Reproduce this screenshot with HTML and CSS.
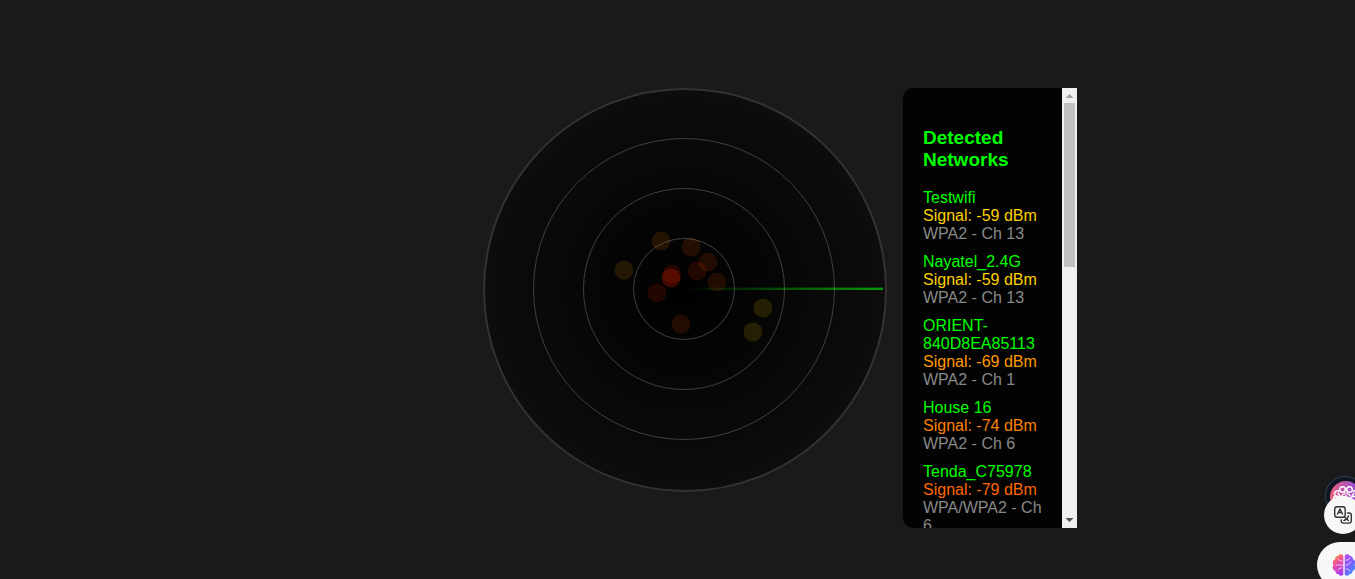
FILE: index.html
```
<!DOCTYPE html>
<html lang="en">
<head>
<meta charset="utf-8">
<title>WiFi Radar</title>
<link rel="stylesheet" href="styles.css">
</head>
<body>
<main class="stage">
  <svg class="radar" viewBox="0 0 404 404" role="img" aria-label="Network radar">
    <defs>
      <radialGradient id="disc"><stop offset="0" stop-color="#000"/><stop offset="1" stop-color="#0d0d0d"/></radialGradient>
      <linearGradient id="sweep" gradientUnits="userSpaceOnUse" x1="200" y1="0" x2="400" y2="0"><stop offset="0" stop-color="#0f0" stop-opacity="0"/><stop offset="1" stop-color="#0f0" stop-opacity=".58"/></linearGradient>
    </defs>
    <circle cx="202" cy="202" r="201" fill="url(#disc)" stroke="#333" stroke-width="2"/>
    <g fill="none" stroke="#404040">
      <circle cx="201" cy="201" r="50.5"/>
      <circle cx="201" cy="201" r="100.5"/>
      <circle cx="201" cy="201" r="150.5"/>
    </g>
    <rect x="202" y="199.600" width="198" height="2.400" fill="url(#sweep)"/>
    <g fill-opacity=".13">
      <circle cx="178" cy="153" r="9.5" fill="#ff8000"/>
      <circle cx="141" cy="182" r="9.5" fill="#ff9900"/>
      <circle cx="208" cy="159" r="9.5" fill="#ff6600"/>
      <circle cx="225" cy="174" r="9.5" fill="#ff5500"/>
      <circle cx="214" cy="183" r="9.5" fill="#ff3300"/>
      <circle cx="234" cy="194" r="9.5" fill="#ff5500"/>
      <circle cx="189" cy="186" r="9.5" fill="#ff2a00"/>
      <circle cx="188" cy="190" r="9.5" fill="#ff2a00" fill-opacity=".24"/>
      <circle cx="174" cy="205" r="9.5" fill="#ff3000"/>
      <circle cx="198" cy="236" r="9.5" fill="#ff5500"/>
      <circle cx="280" cy="220" r="9.5" fill="#ffd000"/>
      <circle cx="270" cy="244" r="9.5" fill="#ffd000"/>
    </g>
  </svg>
  <section class="panel" aria-labelledby="networks-title">
    <div class="scroller">
      <h3 class="title" id="networks-title">Detected Networks</h3>
      <ul class="networks">
        <li class="network"><div>Testwifi</div><div class="strong">Signal: -59 dBm</div><div class="meta">WPA2 - Ch 13</div></li>
        <li class="network"><div>Nayatel_2.4G</div><div class="strong">Signal: -59 dBm</div><div class="meta">WPA2 - Ch 13</div></li>
        <li class="network"><div>ORIENT-840D8EA85113</div><div class="good">Signal: -69 dBm</div><div class="meta">WPA2 - Ch 1</div></li>
        <li class="network"><div>House 16</div><div class="fair">Signal: -74 dBm</div><div class="meta">WPA2 - Ch 6</div></li>
        <li class="network"><div>Tenda_C75978</div><div class="weak">Signal: -79 dBm</div><div class="meta">WPA/WPA2 - Ch 6</div></li>
      </ul>
    </div>
    <div class="scrollbar" aria-hidden="true">
      <svg class="arrow" viewBox="0 0 15 15"><path d="M3.500 10L7.500 6l4 4z" fill="#a3a3a3"/></svg>
      <div class="track"><div class="thumb"></div></div>
      <svg class="arrow" viewBox="0 0 15 15"><path d="M3.500 5L7.500 9l4-4z" fill="#505050"/></svg>
    </div>
  </section>
</main>
<button class="float profile" aria-label="Assistant">
  <svg viewBox="0 0 40 40" width="40" height="40">
    <defs><linearGradient id="pink" x2="1"><stop stop-color="#e8627c"/><stop offset=".45" stop-color="#c155ad"/><stop offset="1" stop-color="#7c48e8"/></linearGradient></defs>
    <circle cx="20" cy="20" r="19.5" fill="#101522" stroke="#34435c"/>
    <circle cx="21" cy="21" r="16" fill="url(#pink)"/>
    <g fill="none" stroke="#fff" stroke-width="1.4" stroke-linecap="round">
      <path d="M21 19v15M20 17c-1 2-3 1-3 3M22 17c1 2 3 1 3 3M15 20l-2-3M27 20l2-3"/>
      <circle cx="17.500" cy="13.500" r="2.800"/><circle cx="24.500" cy="13.500" r="2.800"/>
      <path d="M14 15c-4-1-6 3-3 5 2 1 4 0 5 2M28 15c4-1 6 3 3 5-2 1-4 0-5 2M11 20c-4 1-3 6 1 5M31 20c4 1 3 6-1 5"/>
    </g>
  </svg>
</button>
<button class="float translate" aria-label="Translate">
  <svg viewBox="0 0 38 38" width="38" height="38">
    <circle cx="19" cy="19" r="19" fill="#f8f8f8"/>
    <g fill="none" stroke="#333" stroke-width="1.400" stroke-linecap="round" stroke-linejoin="round">
      <rect x="10.700" y="10.700" width="10.500" height="10.500" rx="2.500"/>
      <path d="M13.500 18l2.500-5 2.500 5M14.500 16.500h3M23.500 17h1.500q2.300 0 2.300 2.300v5.500q0 2.300-2.300 2.300h-5.500q-2.300 0-2.300-2.300v-1M20 24.500c2-.5 3.500-2 4.500-4.500M21 21.500l3.500 3"/>
    </g>
  </svg>
</button>
<button class="float brain" aria-label="Open sidebar">
  <svg viewBox="0 0 24 24" width="24" height="24">
    <defs>
      <linearGradient id="left" x1=".2" y1="0" x2=".6" y2="1"><stop stop-color="#ff9a2e"/><stop offset=".4" stop-color="#f0509a"/><stop offset="1" stop-color="#a63cf5"/></linearGradient>
      <linearGradient id="right" x1=".1" y1="0" x2=".8" y2="1"><stop stop-color="#c04df5"/><stop offset=".5" stop-color="#7a5cff"/><stop offset="1" stop-color="#2e9bff"/></linearGradient>
    </defs>
    <path fill="url(#left)" d="M11.300 3v18c0 2-4 2.500-5 0-2 0-3-1.500-2.800-3C.5 17-.2 13.500 1.500 12 0 9.500 1 7 3 6.500 3 4 4.500 3 6 3c1-2.500 5-2 5.300 0z"/>
    <path fill="url(#right)" d="M12.700 3v18c0 2 4 2.500 5 0 2 0 3-1.500 2.800-3 3-1 3.700-4.500 2-6 1.500-2.500.5-5-1.500-5.500C21 4 19.500 3 18 3c-1-2.500-5-2-5.300 0z"/>
    <path fill="none" stroke="#f8dff8" stroke-width=".8" stroke-linecap="round" d="M10 8H8L6 6M4 12h7M6 17l2-2h2M14 7h2l2-2M14 12h2l3-3M14 16h2l2 2"/>
  </svg>
</button>
</body>
</html>
```
FILE: styles.css
```
* { box-sizing: border-box; }
body {
  margin: 0;
  min-height: 100vh;
  background: #1a1a1a;
  color: #0f0;
  font: 16px/18px "Liberation Sans", Arial, sans-serif;
  overflow: hidden;
}
.stage {
  display: flex;
  justify-content: center;
  align-items: flex-start;
  gap: 16px;
  padding: 88px 0 0 205px;
}
.radar { width: 404px; flex: none; }
.panel {
  display: flex;
  width: 174px;
  height: 440px;
  border-radius: 10px 0 0 10px;
  background: #030303;
  overflow: hidden;
}
.scroller {
  flex: 1;
  min-width: 0;
  padding: 20px;
  overflow-y: auto;
}
.scrollbar {
  display: flex;
  flex-direction: column;
  width: 15px;
  background: #f0f0f0;
}
.arrow { width: 15px; height: 15px; flex: none; }
.track { flex: 1; padding: 0 2px; }
.thumb { height: 40%; background: #c1c1c1; }
.title { margin: 19px 0 18px; font-size: 19px; line-height: 22px; }
.networks { margin: 0; padding: 0; list-style: none; }
.network { margin-bottom: 10px; }
.strong { color: #ffd000; }
.good { color: #ff9900; }
.fair { color: #ff8000; }
.weak { color: #ff6600; }
.meta { color: #888; }
.float {
  position: fixed;
  display: flex;
  padding: 0;
  border: 0;
  background: none;
}
.profile { right: -10px; bottom: 63px; }
.translate { right: -7px; bottom: 45px; }
.brain {
  right: -22px;
  bottom: -9px;
  width: 60px;
  height: 46px;
  padding: 11px 0 0 15px;
  border-radius: 23px;
  background: #f8f8f8;
}
```
